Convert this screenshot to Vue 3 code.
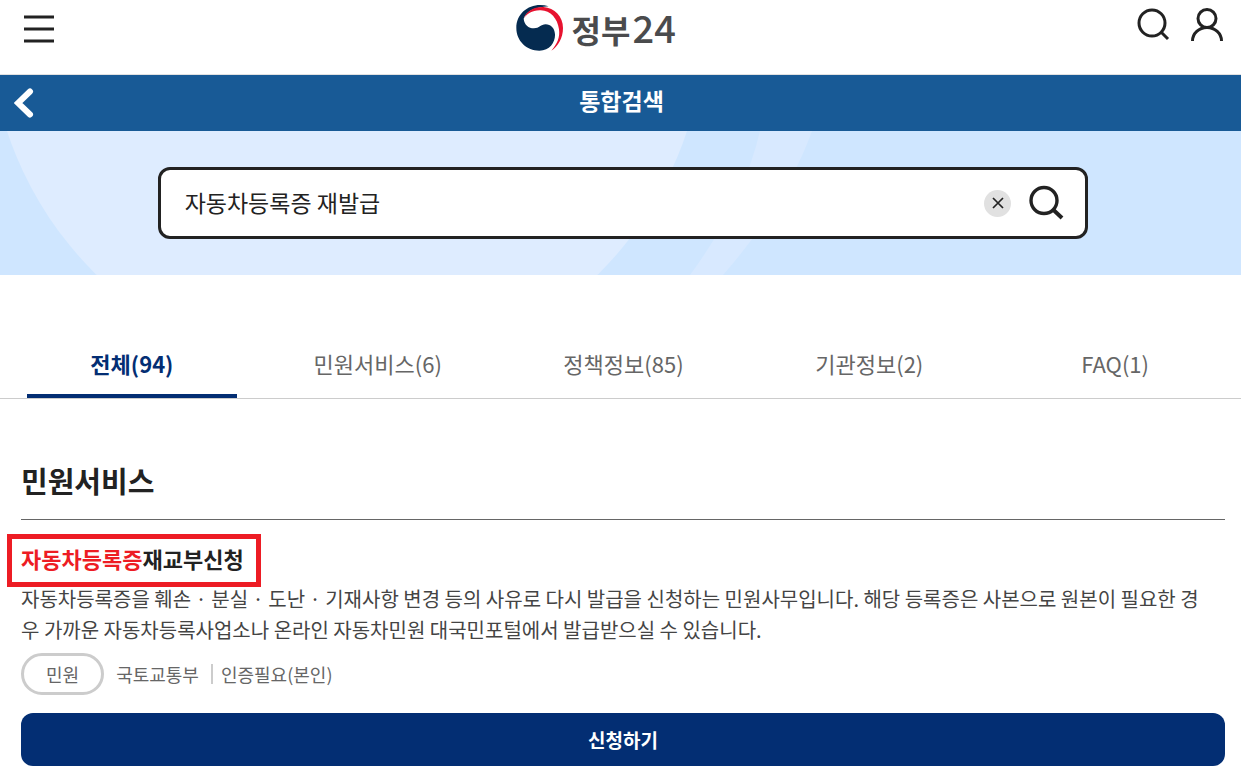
<script setup>
import { ref } from 'vue'

const query = ref('자동차등록증 재발급')
const active = ref(0)
const tabs = ['전체(94)', '민원서비스(6)', '정책정보(85)', '기관정보(2)', 'FAQ(1)']
</script>

<template>
  <div class="page">
    <header class="top">
      <div class="side">
        <button class="icon" type="button" aria-label="전체메뉴">
          <svg width="30" height="28" viewBox="0 0 30 28" stroke="#222" stroke-width="3">
            <path d="M0 2H30M0 14H30M0 26H30" />
          </svg>
        </button>
      </div>
      <a class="logo" href="#">
        <svg width="48" height="46" viewBox="6 9 144 138" aria-hidden="true">
          <path d="M104 13C55 -2 7 28 7 78C7 117 38 146 76 146C108 146 124 120 123 97C122 78 110 67 95 67C80 67 76 79 60 79C43 79 31 68 29 50C38 26 62 16 104 13Z" fill="#052b50" />
          <path d="M29 51C36 28 60 14 88 15C122 17 147 44 147 78C147 108 132 134 112 146C131 124 138 106 135 82C131 50 110 26 80 25C56 24 37 35 29 51Z" fill="#e7122f" />
        </svg>
        <span class="name">정부<b>24</b></span>
      </a>
      <div class="side right">
        <button class="icon" type="button" aria-label="검색">
          <svg width="34" height="34" viewBox="0 0 34 34" fill="none" stroke="#222" stroke-width="3">
            <circle cx="16" cy="15" r="13" /><path d="M25 24L32 31" />
          </svg>
        </button>
        <button class="icon" type="button" aria-label="내 정보">
          <svg width="34" height="34" viewBox="0 0 34 34" fill="none" stroke="#222" stroke-width="3">
            <circle cx="17" cy="10.5" r="9" /><path d="M2.5 33A14.5 13.5 0 0 1 31.5 33" />
          </svg>
        </button>
      </div>
    </header>

    <div class="title-bar">
      <button class="icon back" type="button" aria-label="뒤로">
        <svg width="20" height="30" viewBox="0 0 20 30" fill="none" stroke="#fff" stroke-width="6" stroke-linecap="round">
          <path d="M16 3.5L4 15L16 26.5" />
        </svg>
      </button>
      <h1>통합검색</h1>
    </div>

    <section class="hero">
      <svg class="waves" viewBox="0 0 1241 144" preserveAspectRatio="xMidYMid slice" aria-hidden="true">
        <circle cx="347" cy="-112" r="358" fill="#deecff" />
        <path d="M760 0Q743 72 690 144H723Q786 72 812 0Z" fill="#d8e9ff" />
      </svg>
      <form class="search" @submit.prevent>
        <input v-model="query" type="text" aria-label="검색어" />
        <button class="clear" type="button" aria-label="지우기" @click="query = ''">
          <svg width="12" height="12" viewBox="0 0 12 12" stroke="#222" stroke-width="1.7"><path d="M1 1L11 11M11 1L1 11" /></svg>
        </button>
        <button class="icon" type="submit" aria-label="검색">
          <svg width="36" height="36" viewBox="0 0 36 36" fill="none" stroke="#222" stroke-width="3.4">
            <circle cx="15" cy="15.5" r="13" /><path d="M24.5 25L33 33" stroke-width="4" />
          </svg>
        </button>
      </form>
    </section>

    <nav class="tabs">
      <button v-for="(tab, i) in tabs" :key="tab" type="button" :class="{ on: i === active }" @click="active = i">{{ tab }}</button>
    </nav>

    <main>
      <h2>민원서비스</h2>
      <article>
        <h3><a href="#"><em>자동차등록증</em>재교부신청</a></h3>
        <p class="desc">자동차등록증을 훼손 · 분실 · 도난 · 기재사항 변경 등의 사유로 다시 발급을 신청하는 민원사무입니다. 해당 등록증은 사본으로 원본이 필요한 경우 가까운 자동차등록사업소나 온라인 자동차민원 대국민포털에서 발급받으실 수 있습니다.</p>
        <div class="meta">
          <span class="badge">민원</span>
          <span>국토교통부</span>
          <span class="auth">인증필요(본인)</span>
        </div>
        <button class="apply" type="button">신청하기</button>
      </article>
    </main>
  </div>
</template>

<style>
body {
  margin: 0;
  background: #fff;
}
</style>

<style scoped>
.page {
  font-family: "Noto Sans CJK KR", "Noto Sans", sans-serif;
  color: #222;
}
button {
  font: inherit;
  color: inherit;
  margin: 0;
  padding: 0;
  border: 0;
  background: none;
  cursor: pointer;
}
a {
  color: inherit;
  text-decoration: none;
}
svg {
  display: block;
}
h1, h2, h3, p {
  margin: 0;
}
.top {
  display: grid;
  grid-template-columns: 9fr auto 10fr;
  height: 74px;
  padding: 0 17px 0 24px;
  border-bottom: 1px solid #e1e1e1;
}
.side {
  display: flex;
  align-items: flex-start;
  padding-top: 15px;
}
.right {
  justify-content: flex-end;
  gap: 20px;
  padding-top: 8px;
}
.logo {
  display: flex;
  align-items: flex-start;
  gap: 8px;
  padding: 5px 2px 0 0;
  color: #4a4b4d;
}
.name {
  display: flex;
  align-items: baseline;
  gap: 2px;
  font-size: 32px;
  line-height: 44px;
  font-weight: 700;
}
.name b {
  font-size: 38px;
  font-weight: 500;
}
.title-bar {
  display: grid;
  grid-template-columns: 1fr auto 1fr;
  align-items: center;
  height: 56px;
  padding: 0 12px 0 14px;
  background: #185a96;
  color: #fff;
}
.back {
  justify-self: start;
}
h1 {
  font-size: 23px;
  line-height: 34px;
  padding-bottom: 6px;
}
.hero {
  position: relative;
  display: flex;
  justify-content: center;
  padding: 36px 0 36px 5px;
  background: #cfe6ff;
}
.waves {
  position: absolute;
  inset: 0;
  width: 100%;
  height: 100%;
}
.search {
  position: relative;
  display: flex;
  align-items: center;
  width: 75vw;
  height: 72px;
  box-sizing: border-box;
  padding: 0 20px 0 24px;
  border: 3px solid #222;
  border-radius: 12px;
  background: #fff;
}
.search input {
  flex: 1;
  min-width: 0;
  padding: 0 0 2px;
  border: 0;
  outline: 0;
  background: none;
  font: inherit;
  font-size: 23px;
  color: #222;
}
.clear {
  display: grid;
  place-items: center;
  width: 27px;
  height: 27px;
  margin-right: 18px;
  border-radius: 50%;
  background: #e1e1e1;
}
.tabs {
  display: grid;
  grid-template-columns: repeat(5, 1fr);
  margin-top: 56px;
  padding: 0 3px 0 9px;
  border-bottom: 1px solid #ccc;
}
.tabs button {
  height: 67px;
  margin: 0 18px;
  border-bottom: 4px solid transparent;
  font-size: 22px;
  color: #666;
}
.tabs .on {
  border-color: #032e73;
  color: #032e73;
  font-weight: 700;
}
main {
  padding: 59px 16px 9px 21px;
}
h2 {
  font-size: 29px;
  line-height: 44px;
  padding-bottom: 17px;
  border-bottom: 1px solid #666;
}
article {
  display: flex;
  flex-direction: column;
  align-items: flex-start;
}
h3 {
  margin: 14px 0 0 -14px;
  padding: 1px 12px 6px 9px;
  border: 5px solid #ed1c24;
  font-size: 22px;
  line-height: 36px;
}
h3 em {
  font-style: normal;
  color: #ed1c24;
}
.desc {
  margin-top: -4px;
  padding-right: 12px;
  font-size: 20px;
  line-height: 31px;
  color: #444;
}
.meta {
  display: flex;
  align-items: center;
  margin-top: 8px;
  font-size: 18px;
  line-height: 20px;
  color: #666;
}
.badge {
  margin-right: 12px;
  padding: 8px 22px;
  border: 3px solid #ccc;
  border-radius: 21px;
}
.auth {
  margin-left: 12px;
  padding-left: 8px;
  border-left: 2px solid #ccc;
}
.apply {
  width: 100%;
  height: 53px;
  margin-top: 18px;
  border-radius: 12px;
  background: #032e73;
  color: #fff;
  font-size: 19px;
  font-weight: 700;
}
</style>
